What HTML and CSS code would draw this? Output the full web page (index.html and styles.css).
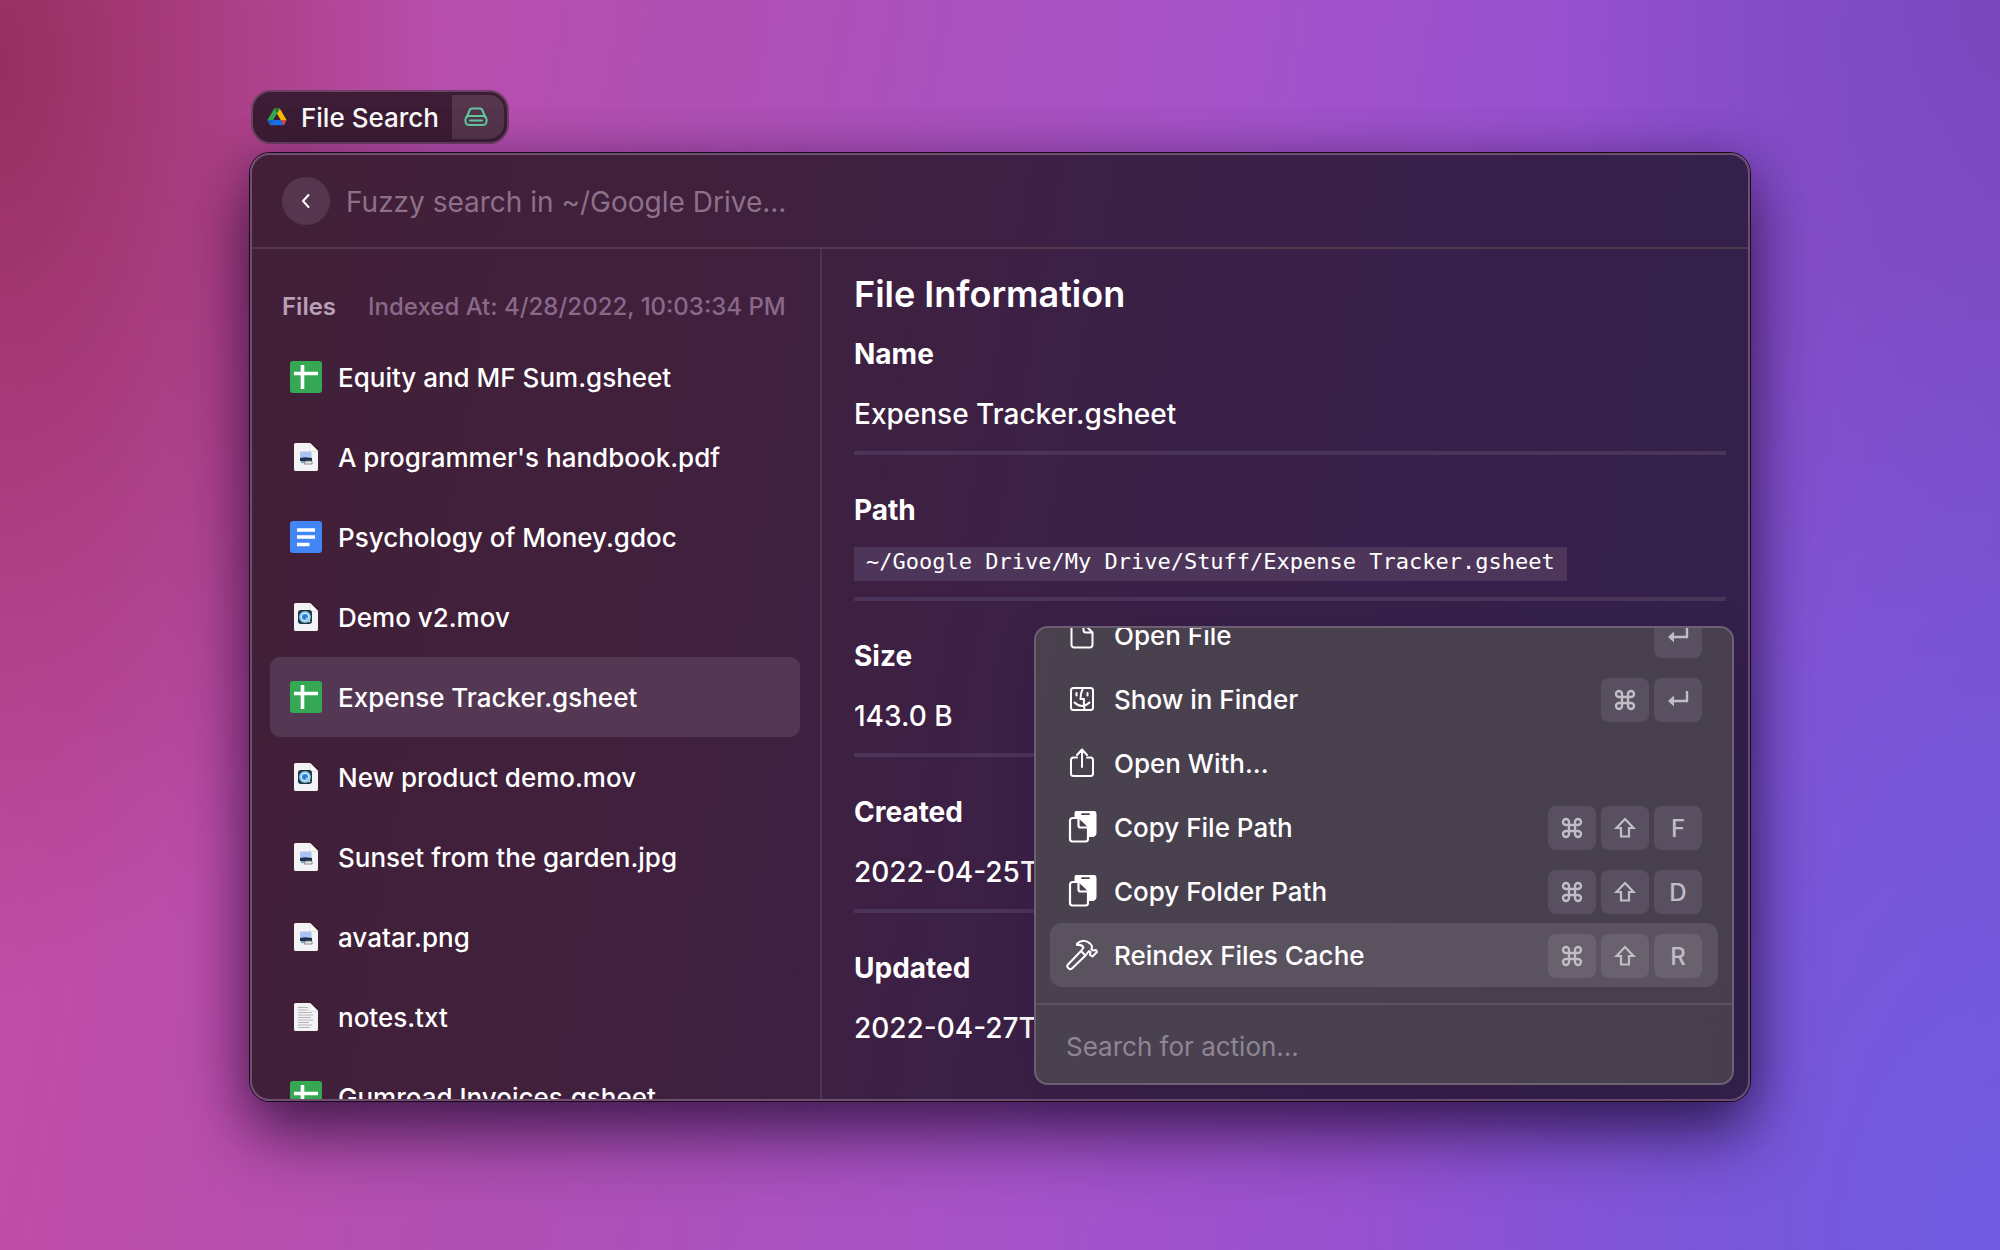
FILE: index.html
```html
<!DOCTYPE html>
<html lang="en">
<head>
<meta charset="utf-8">
<title>File Search</title>
<link rel="stylesheet" href="styles.css">
</head>
<body>
<svg class="sprite" aria-hidden="true">
  <symbol id="sheet" viewBox="0 0 32 32"><rect width="32" height="32" rx="3" fill="#34a853"/><path d="M4 12.500h24M12.500 4v24" stroke="#fff" stroke-width="3.600"/></symbol>
  <symbol id="gdoc" viewBox="0 0 32 32"><rect width="32" height="32" rx="3" fill="#4285f4"/><path d="M7 9h18M7 16h18M7 23.500h12.500" stroke="#fff" stroke-width="3.600"/></symbol>
  <symbol id="page" viewBox="0 0 32 32"><path d="M5.500 2h14.500l8 8v18.500a1.500 1.500 0 0 1-1.500 1.500h-21A1.500 1.500 0 0 1 4 28.500v-25A1.500 1.500 0 0 1 5.500 2z" fill="#f3f2f4"/><path d="M20 2v6.500a1.500 1.500 0 0 0 1.500 1.500H28z" fill="#fff" stroke="#cfcdd2" stroke-width=".6"/></symbol>
  <symbol id="image" viewBox="0 0 32 32"><use href="#page"/><path d="M10 10.500h11.500v8H10z" fill="#a9c3f2"/><path d="M10 17l5-.8 7 .8v3H10z" fill="#1c2f4d"/><path d="M11 20h5v2h-5z" fill="#7e9fc6"/><path d="M15.500 20h6.500v3h-8z" fill="#e8e6e4" stroke="#777" stroke-width=".8"/></symbol>
  <symbol id="movie" viewBox="0 0 32 32"><use href="#page"/><rect x="8" y="9" width="14" height="14" rx="3" fill="#20323b"/><circle cx="15" cy="16" r="6" fill="#7cc4ee"/><circle cx="15" cy="16" r="3.600" fill="#2c7fd0" stroke="#d5efff" stroke-width="1.200"/><path d="M16 17l4 4" stroke="#b9c9d2" stroke-width="2"/></symbol>
  <symbol id="text" viewBox="0 0 32 32"><use href="#page"/><path d="M8 6.500h10M8 9h10M8 11.500h14M8 14h15M8 16.500h13M8 19h15M8 21.500h11M8 24h14M8 26.500h12" stroke="#b5b3b6" stroke-width="1.100"/></symbol>
  <symbol id="cmd" viewBox="0 0 24 24"><path d="M9 9h6v6H9zM9 9V6a3 3 0 1 0-3 3zM15 9h3a3 3 0 1 0-3-3zM15 15v3a3 3 0 1 0 3-3zM9 15H6a3 3 0 1 0 3 3z" fill="none" stroke="currentColor" stroke-width="2.400"/></symbol>
  <symbol id="shift" viewBox="0 0 24 24"><path d="M12 3l8.500 9H16v8.500H8V12H3.500z" fill="none" stroke="currentColor" stroke-width="2.200"/></symbol>
  <symbol id="enter" viewBox="0 0 24 24"><path d="M21 3v10H6" fill="none" stroke="currentColor" stroke-width="2.400"/><path d="M2 13l6-5.500v11z" fill="currentColor"/></symbol>
  <symbol id="copy" viewBox="0 0 32 32"><path d="M12.500 0h14a3 3 0 0 1 3 3v19a3 3 0 0 1-3 3H20V16L11 8H9.500V3a3 3 0 0 1 3-3z" fill="#fff"/><path d="M16 3.200h7" stroke="#4a414f" stroke-width="1.800"/><path d="M12 7H6.500A2.500 2.500 0 0 0 4 9.500V28a2.500 2.500 0 0 0 2.500 2.500h13A2.500 2.500 0 0 0 22 28V16.500z" fill="#4a414f" stroke="none"/><path d="M12.500 7H6.500A2.500 2.500 0 0 0 4 9.500V28a2.500 2.500 0 0 0 2.500 2.500h13A2.500 2.500 0 0 0 22 28V16.500h-7.500a2 2 0 0 1-2-2z" fill="none" stroke="#fff" stroke-width="2.200"/><path d="M14.800 9.500v4.700h5z" fill="#4a414f" stroke="none"/></symbol>
</svg>

<main class="desktop">
  <div class="badge">
    <svg class="drive" viewBox="0 0 24 22" aria-hidden="true"><path d="M8.500 1h7l-8 13.500L4 21 .500 14.500z" fill="#34a853"/><path d="M8.500 1h7L23.500 14.500h-7z" fill="#fbbc04"/><path d="M7.500 14.500h16L20 21H4z" fill="#1a73e8"/><path d="M16.500 14.500h7L20 21z" fill="#ea4335"/><path d="M.500 14.500h7L4 21z" fill="#1967d2"/><path d="M8.500 1h7L12 7.200z" fill="#188038"/></svg>
    <span class="badge-name">File Search</span>
    <span class="badge-disk"><svg viewBox="0 0 24 20" aria-hidden="true"><path d="M3 9.500L5.800 3A2 2 0 0 1 7.600 1.500h8.800A2 2 0 0 1 18.200 3L21 9.500"/><rect x="1.500" y="9" width="21" height="9" rx="3.500"/><path d="M6 13.500h12"/></svg></span>
  </div>

  <section class="window">
    <header class="search">
      <button class="back" aria-label="Back"><svg viewBox="0 0 16 16"><path d="M10.500 2L5 8l5.500 6"/></svg></button>
      <input class="search-input" type="text" aria-label="Search files" placeholder="Fuzzy search in ~/Google Drive...">
    </header>
    <div class="body">
      <nav class="files" aria-label="Files">
        <div class="files-head"><h2>Files</h2><span>Indexed At: 4/28/2022, 10:03:34 PM</span></div>
        <button class="file"><svg><use href="#sheet"/></svg>Equity and MF Sum.gsheet</button>
        <button class="file"><svg><use href="#image"/></svg>A programmer's handbook.pdf</button>
        <button class="file"><svg><use href="#gdoc"/></svg>Psychology of Money.gdoc</button>
        <button class="file"><svg><use href="#movie"/></svg>Demo v2.mov</button>
        <button class="file selected"><svg><use href="#sheet"/></svg>Expense Tracker.gsheet</button>
        <button class="file"><svg><use href="#movie"/></svg>New product demo.mov</button>
        <button class="file"><svg><use href="#image"/></svg>Sunset from the garden.jpg</button>
        <button class="file"><svg><use href="#image"/></svg>avatar.png</button>
        <button class="file"><svg><use href="#text"/></svg>notes.txt</button>
        <button class="file"><svg><use href="#sheet"/></svg>Gumroad Invoices.gsheet</button>
      </nav>
      <article class="info">
        <h1>File Information</h1>
        <dl>
          <div class="field"><dt>Name</dt><dd>Expense Tracker.gsheet</dd></div>
          <div class="field field-path"><dt>Path</dt><dd><code>~/Google Drive/My Drive/Stuff/Expense Tracker.gsheet</code></dd></div>
          <div class="field"><dt>Size</dt><dd>143.0 B</dd></div>
          <div class="field"><dt>Created</dt><dd>2022-04-25T</dd></div>
          <div class="field"><dt>Updated</dt><dd>2022-04-27T</dd></div>
        </dl>
      </article>
    </div>

    <div class="actions">
      <div class="action-list">
        <button class="action"><svg viewBox="0 0 32 32"><path d="M8 4.500h9.500l9 9V26a2.500 2.500 0 0 1-2.500 2.500H8A2.500 2.500 0 0 1 5.500 26V7A2.500 2.500 0 0 1 8 4.500zM17.500 4.500V11a2.500 2.500 0 0 0 2.500 2.500h6.500"/></svg><span>Open File</span><kbd><svg><use href="#enter"/></svg></kbd></button>
        <button class="action"><svg viewBox="0 0 32 32"><rect x="5" y="5" width="22" height="22" rx="2.500"/><path d="M17 5c-2 4-2.500 7.500-2.500 11H18c-.5 4 0 8 .5 11M8.500 19.500c4.500 4.500 10.500 4.500 15 0M10.500 10v2.500M21.500 10v2.500"/></svg><span>Show in Finder</span><kbd><svg><use href="#cmd"/></svg></kbd><kbd><svg><use href="#enter"/></svg></kbd></button>
        <button class="action"><svg viewBox="0 0 32 32"><path d="M11 10.500H7.500A2.500 2.500 0 0 0 5 13v13.500A2.500 2.500 0 0 0 7.500 29h17a2.500 2.500 0 0 0 2.500-2.500V13a2.500 2.500 0 0 0-2.500-2.500H21M16 20V3M11 8l5-5.500L21 8"/></svg><span>Open With...</span></button>
        <button class="action"><svg><use href="#copy"/></svg><span>Copy File Path</span><kbd><svg><use href="#cmd"/></svg></kbd><kbd><svg><use href="#shift"/></svg></kbd><kbd>F</kbd></button>
        <button class="action"><svg><use href="#copy"/></svg><span>Copy Folder Path</span><kbd><svg><use href="#cmd"/></svg></kbd><kbd><svg><use href="#shift"/></svg></kbd><kbd>D</kbd></button>
        <button class="action selected"><svg viewBox="0 0 32 32"><path d="M15 12L2 25.500a2.300 2.300 0 0 0 0 3.200l.8.800a2.300 2.300 0 0 0 3.200 0L19.500 16.500M11 4.500C16 .5 21 1.500 24 4.500l2 2.500-.5 3.500 1.500 1 3-.5 1 2-4.500 4.500-2.500-1.500.5-3-1.500-1-3.500 4.500-4.500-4.500 2.500-3.500C16.500 6.500 14.500 5.500 11 6z"/></svg><span>Reindex Files Cache</span><kbd><svg><use href="#cmd"/></svg></kbd><kbd><svg><use href="#shift"/></svg></kbd><kbd>R</kbd></button>
      </div>
      <input class="action-search" type="text" aria-label="Search for action" placeholder="Search for action...">
    </div>
  </section>
</main>
</body>
</html>
```
FILE: styles.css
```css
* { box-sizing: border-box; }

body {
  margin: 0;
  font-family: Inter, "Liberation Sans", sans-serif;
  font-weight: 500;
  color: #fff;
}

button, input { font: inherit; color: inherit; border: 0; background: none; padding: 0; }
h1, h2, dl, dd { margin: 0; }
svg { flex: none; }
.sprite { display: none; }

.desktop {
  min-height: 100vh;
  padding: 90px 12.5% 148px;
  overflow: hidden;
  background:
    radial-gradient(ellipse 22% 75% at 0 5%, #962f5f 0%, rgba(150, 47, 95, 0) 100%),
    radial-gradient(ellipse 32% 80% at 100% 100%, #705ce2 0%, rgba(112, 92, 226, 0) 100%),
    radial-gradient(ellipse 22% 60% at 100% 0, #7948bd 0%, rgba(121, 72, 189, 0) 100%),
    linear-gradient(100deg, #c74ca3 0%, #b04fb2 30%, #a552c8 55%, #9150d2 78%, #7a50cc 100%);
}

.badge {
  display: flex;
  align-items: center;
  width: max-content;
  height: 54px;
  margin: 0 0 9px 1px;
  padding: 3px;
  border: 2px solid #6d4065;
  border-radius: 20px;
  background: #3d1d35;
  font-size: 26px;
}
.drive { width: 20px; height: 20px; margin: 0 14px 0 11px; }
.badge-name { margin-right: 13px; }
.badge-disk {
  display: flex;
  align-items: center;
  align-self: stretch;
  padding: 0 16px 0 12px;
  border-radius: 0 15px 15px 0;
  background: #55364d;
}
.badge-disk svg { width: 24px; height: 20px; fill: none; stroke: #62cba1; stroke-width: 2; stroke-linecap: round; }

.window {
  position: relative;
  height: calc(100vh - 302px);
  border: 2px solid #6f4e70;
  border-radius: 20px;
  background: linear-gradient(100deg, #421f37 0%, #40203c 28%, #3c2045 50%, #37204a 72%, #32214c 100%);
  box-shadow: 0 0 0 1px #170a1a, 0 34px 66px rgba(20, 5, 35, .6), 0 6px 50px rgba(20, 5, 35, .3);
  display: flex;
  flex-direction: column;
}

.search {
  display: flex;
  align-items: center;
  gap: 16px;
  height: 94px;
  padding: 0 30px;
  border-bottom: 2px solid #54384f;
  flex: none;
}
.back { display: grid; place-items: center; width: 48px; height: 48px; border-radius: 50%; background: #55364e; }
.back svg { width: 16px; height: 16px; fill: none; stroke: #fff; stroke-width: 2; stroke-linecap: round; stroke-linejoin: round; }
.search-input { flex: 1; padding-top: 2px; font-size: 28px; font-weight: 400; }
.search-input::placeholder { color: #8c718a; opacity: 1; }

.body { flex: 1; min-height: 0; display: grid; grid-template-columns: 570px 1fr; }

.files { padding: 34px 20px 0 18px; border-right: 2px solid #50354f; overflow: hidden; border-radius: 0 0 0 18px; }
.files-head { display: flex; align-items: center; gap: 32px; height: 46px; margin-bottom: 8px; padding-left: 12px; font-size: 24px; color: #88698a; white-space: nowrap; }
.files-head h2 { font-size: 24px; font-weight: 600; color: #b8a0b6; }

.file {
  display: flex;
  align-items: center;
  gap: 16px;
  width: 100%;
  height: 80px;
  padding: 0 20px;
  border-radius: 10px;
  font-size: 26px;
  white-space: nowrap;
}
.file svg { width: 32px; height: 32px; }
.file.selected { background: #543752; }

.info { padding: 21px 22px 0 32px; overflow: hidden; }
h1 { font-size: 36px; line-height: 48px; font-weight: 600; margin-bottom: 16px; }
.field { font-size: 28px; line-height: 40px; margin-bottom: 35px; padding-bottom: 17px; border-bottom: 4px solid #4b3459; }
.field:last-child { border: 0; }
dt { font-weight: 700; margin-bottom: 20px; }
dd { font-weight: 450; }
.field-path dt { margin-bottom: 17px; }
.field-path dd { display: flex; }
.field-path { padding-bottom: 16px; }
code { padding: 0 12px 4px; background: #4d3659; font: 22px/30px "DejaVu Sans Mono", monospace; }

.actions {
  position: absolute;
  right: 14px;
  bottom: 14px;
  width: 700px;
  height: 459px;
  display: flex;
  flex-direction: column;
  justify-content: flex-end;
  overflow: hidden;
  border: 2px solid #6d6073;
  border-radius: 14px;
  background: linear-gradient(100deg, #4a414f, #473f4e);
  box-shadow: 0 10px 40px rgba(30, 10, 50, .15);
}
.action-list { padding: 0 14px 16px; }
.action {
  display: flex;
  align-items: center;
  gap: 5px;
  width: 100%;
  height: 64px;
  padding: 0 16px;
  border-radius: 12px;
  font-size: 26px;
  text-align: left;
}
.action > svg { width: 32px; height: 32px; margin-right: 11px; fill: none; stroke: #fff; stroke-width: 2; stroke-linecap: round; stroke-linejoin: round; }
.action > span { flex: 1; }
.action.selected { background: #5b5260; }
kbd { display: grid; place-items: center; width: 48px; height: 44px; margin-top: 2px; border-radius: 8px; background: #585060; color: #c2bcc6; font: 500 24px Inter, sans-serif; }
.action.selected kbd { background: #69616e; }
kbd svg { width: 24px; height: 24px; }
.action-search { flex: none; height: 80px; padding: 4px 30px 0; border-top: 2px solid #5c5362; font-size: 26px; font-weight: 400; }
.action-search::placeholder { color: #8f8596; opacity: 1; }
```
